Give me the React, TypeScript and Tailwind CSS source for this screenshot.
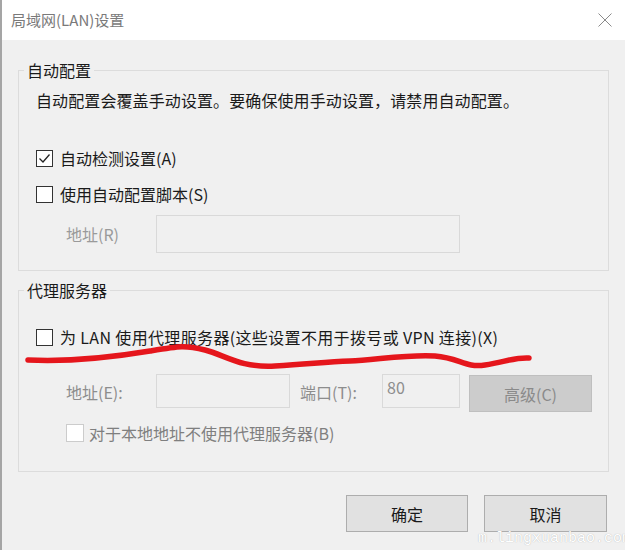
const FONT = "font-['Noto_Sans_CJK_SC','Noto_Sans',sans-serif]";

function Box({ checked = false, disabled = false }: { checked?: boolean; disabled?: boolean }) {
  return (
    <span
      className={
        disabled
          ? "flex h-[18px] w-[18px] shrink-0 items-center justify-center border border-[#cccccc] bg-white"
          : "flex h-[17px] w-[17px] shrink-0 items-center justify-center border border-[#333333] bg-white"
      }
    >
      {checked && (
        <svg width="15" height="15" viewBox="0 0 15 15">
          <polyline points="2.5,7.5 6,11 12.5,3.5" fill="none" stroke="#222" strokeWidth="1.3" />
        </svg>
      )}
    </span>
  );
}

function Group({ title, children, className }: { title: string; children: React.ReactNode; className: string }) {
  return (
    <fieldset className={`border border-[#dcdcdc] ${className}`}>
      <legend className="ml-[5px] px-[3px] text-[16px] leading-[20px] text-[#1a1a1a]">{title}</legend>
      {children}
    </fieldset>
  );
}

export default function App() {
  return (
    <div className={`relative h-[550px] w-[625px] overflow-hidden border-l-2 border-[#a5a5a5] bg-[#f0f0f0] ${FONT}`}>
      {/* title bar */}
      <div className="flex h-[40px] items-center justify-between bg-white pl-[9px] pr-[13px]">
        <span className="text-[15px] text-[#7a7a7a]">局域网(LAN)设置</span>
        <svg width="14" height="14" viewBox="0 0 14 14">
          <path d="M0.5 0.5 L13.5 13.5 M13.5 0.5 L0.5 13.5" stroke="#8a8a8a" strokeWidth="1" />
        </svg>
      </div>

      <div className="flex flex-col px-[16px]">
        <Group title="自动配置" className="mt-[20px] pb-[17px]">
          <div className="flex flex-col pl-[17px] text-[16px] leading-[20px] text-[#1a1a1a]">
            <p className="mt-[10px] tracking-[0.1px]">自动配置会覆盖手动设置。要确保使用手动设置，请禁用自动配置。</p>
            <label className="mt-[38px] flex items-center gap-[7px]">
              <Box checked />
              <span>自动检测设置(A)</span>
            </label>
            <label className="mt-[16px] flex items-center gap-[7px]">
              <Box />
              <span>使用自动配置脚本(S)</span>
            </label>
            <div className="mt-[11px] flex items-center pl-[30px]">
              <span className="w-[90px] text-[#9a9a9a]">地址(R)</span>
              <div className="h-[38px] w-[304px] border border-[#d9d9d9] bg-[#f0f0f0]" />
            </div>
          </div>
        </Group>

        <Group title="代理服务器" className="mt-[9px] pb-[28px]">
          <div className="flex flex-col pl-[17px] text-[16px] leading-[20px] text-[#1a1a1a]">
            <label className="mt-[27px] flex items-center gap-[7px]">
              <Box />
              <span className="tracking-[0.35px]">为 LAN 使用代理服务器(这些设置不用于拨号或 VPN 连接)(X)</span>
            </label>
            <div className="mt-[27px] flex items-start pl-[30px] text-[#8d8d8d]">
              <span className="w-[90px] leading-[36px]">地址(E):</span>
              <div className="h-[34px] w-[134px] border border-[#d9d9d9] bg-[#f0f0f0]" />
              <span className="ml-[10px] w-[82px] leading-[36px]">端口(T):</span>
              <div className="h-[34px] w-[78px] border border-[#d9d9d9] bg-[#f0f0f0] pl-[4px] pt-[2px]">80</div>
              <div className="ml-[9px] mt-[1px] flex h-[37px] w-[123px] items-center justify-center border border-[#bfbfbf] bg-[#cccccc] text-[#8a8a8a]">
                高级(C)
              </div>
            </div>
            <label className="mt-[11px] flex items-center gap-[5px] pl-[30px]">
              <Box disabled />
              <span className="text-[#7f7f7f]">对于本地地址不使用代理服务器(B)</span>
            </label>
          </div>
        </Group>

        <div className="mr-[2px] mt-[23px] flex justify-end gap-[16px] text-[16px] text-[#1a1a1a]">
          <button className="h-[37px] w-[122px] border border-[#adadad] bg-[#e1e1e1]">确定</button>
          <button className="h-[37px] w-[123px] border border-[#adadad] bg-[#e1e1e1]">取消</button>
        </div>
      </div>

      {/* red hand-drawn underline */}
      <svg className="pointer-events-none absolute left-[-2px] top-0" width="625" height="550">
        <path
          d="M28 360 C 70 362, 120 356, 150 351 S 185 345, 205 350 S 240 368, 275 366 S 325 362, 350 361 S 410 354, 435 356 S 465 368, 485 365 S 515 357, 529 358"
          fill="none"
          stroke="#e5161c"
          strokeWidth="5.5"
          strokeLinecap="round"
        />
      </svg>

      {/* watermark */}
      <span className="pointer-events-none absolute left-[476px] top-[531px] whitespace-nowrap font-['Liberation_Mono',monospace] text-[15px] leading-none text-white [text-shadow:0_0_1px_#a8a8a8]">
        m.lingxuanbao.com
      </span>
    </div>
  );
}
